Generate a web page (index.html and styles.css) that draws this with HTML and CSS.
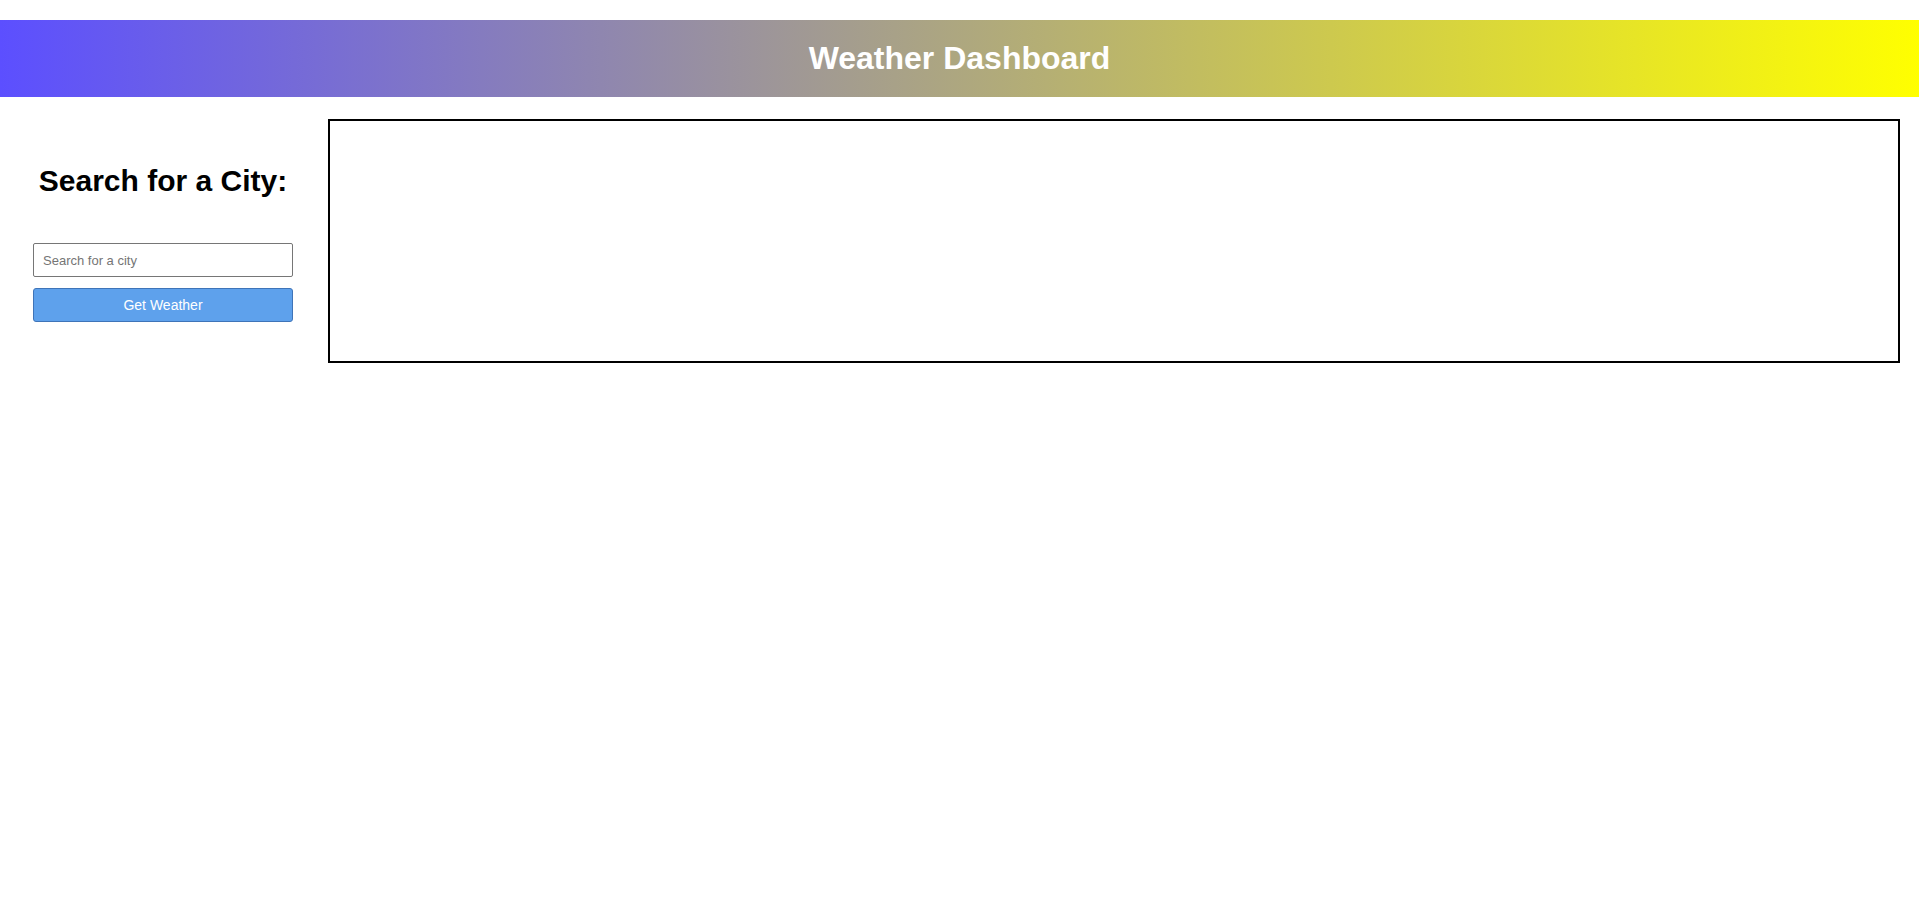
FILE: index.html
```html
<!DOCTYPE html>
<html lang="en">
<head>
<meta charset="utf-8">
<title>Weather Dashboard</title>
<link rel="stylesheet" href="styles.css">
</head>
<body>
<header class="topbar">
  <h1 class="title">Weather Dashboard</h1>
</header>
<main class="layout">
  <aside class="sidebar">
    <h2 class="search-title">Search for a City:</h2>
    <input class="search-input" type="text" placeholder="Search for a city">
    <button class="search-btn" type="button">Get Weather</button>
  </aside>
  <section class="results"></section>
</main>
</body>
</html>
```

FILE: styles.css
```css
* { box-sizing: border-box; }

body {
  margin: 0;
  font-family: "Liberation Sans", Arial, sans-serif;
  background: #ffffff;
  color: #000;
}

.topbar {
  margin-top: 20px;
  height: 77px;
  background: linear-gradient(to right, #5c4fff, #ffff00);
  display: flex;
  align-items: center;
  justify-content: center;
}

.title {
  margin: 0;
  color: #ffffff;
  font-size: 32px;
  font-weight: bold;
}

.layout {
  display: flex;
  align-items: flex-start;
  padding: 22px 19px 0 33px;
  gap: 35px;
}

.sidebar {
  width: 260px;
  flex: none;
  display: flex;
  flex-direction: column;
}

.search-title {
  margin: 44px -10px 45px;
  text-align: center;
  white-space: nowrap;
  font-size: 30px;
  font-weight: bold;
  line-height: 35px;
}

.search-input {
  height: 34px;
  width: 100%;
  border: 1px solid #767676;
  border-radius: 2px;
  padding: 0 9px;
  font-family: "Liberation Sans", Arial, sans-serif;
  font-size: 13px;
  color: #333;
}

.search-input::placeholder { color: #757575; }

.search-btn {
  margin-top: 11px;
  height: 34px;
  width: 100%;
  background: #5ea1ec;
  border: 1px solid #3f74b8;
  border-radius: 3px;
  color: #ffffff;
  font-family: "Liberation Sans", Arial, sans-serif;
  font-size: 14px;
}

.results {
  flex: 1;
  height: 244px;
  border: 2px solid #000;
}
```
